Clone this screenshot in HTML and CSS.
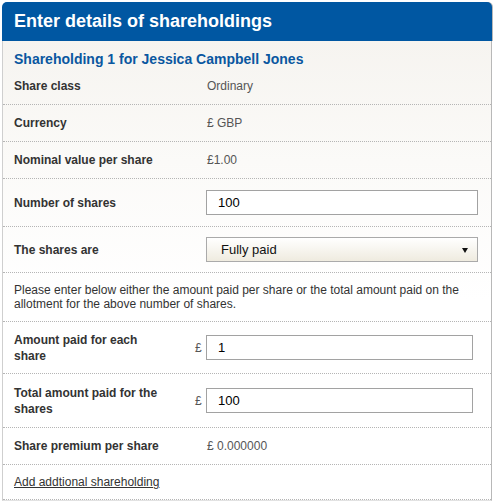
FILE: index.html
```html
<!DOCTYPE html>
<html>
<head>
<meta charset="utf-8">
<link rel="stylesheet" href="styles.css">
</head>
<body>
<div class="panel">
  <div class="panel-head">Enter details of shareholdings</div>
  <div class="panel-body">
    <div class="title">Shareholding 1 for Jessica Campbell Jones</div>
    <div class="row h37">
      <div class="label">Share class</div><div class="cur"></div><div class="value">Ordinary</div>
    </div>
    <div class="row h37">
      <div class="label">Currency</div><div class="cur"></div><div class="value">£ GBP</div>
    </div>
    <div class="row h37">
      <div class="label">Nominal value per share</div><div class="cur"></div><div class="value">£1.00</div>
    </div>
    <div class="row h48">
      <div class="label">Number of shares</div><div class="cur"></div><div class="value"><input class="field wide" type="text" value="100"></div>
    </div>
    <div class="row h46">
      <div class="label">The shares are</div><div class="cur"></div>
      <div class="value">
        <div class="select">
          <span class="select-text">Fully paid</span>
          <svg class="arrow" width="6" height="5" viewBox="0 0 6 5"><path d="M0 0H6L3 5Z" fill="#111"/></svg>
        </div>
      </div>
    </div>
    <div class="note">Please enter below either the amount paid per share or the total amount paid on the allotment for the above number of shares.</div>
    <div class="row h52">
      <div class="label">Amount paid for each share</div><div class="cur">£</div><div class="value"><input class="field narrow" type="text" value="1"></div>
    </div>
    <div class="row h54">
      <div class="label">Total amount paid for the shares</div><div class="cur">£</div><div class="value"><input class="field narrow" type="text" value="100"></div>
    </div>
    <div class="row h37">
      <div class="label">Share premium per share</div><div class="cur"></div><div class="value">£ 0.000000</div>
    </div>
    <div class="row h35 last">
      <a class="add-link" href="#">Add addtional shareholding</a>
    </div>
  </div>
</div>
</body>
</html>
```

FILE: styles.css
```css
* { box-sizing: border-box; }
html, body { margin: 0; padding: 0; background: #fff; }
body { font-family: "Liberation Sans", Arial, sans-serif; font-size: 12px; color: #333; }

.panel {
  margin: 2px 0 0 2px;
  width: 490px;
}

.panel-head {
  height: 39px;
  background: #0057a2;
  color: #fff;
  font-size: 18px;
  font-weight: bold;
  line-height: 39px;
  padding-left: 12px;
  border-radius: 5px 5px 0 0;
  box-shadow: 1px 0 0 #b8b8b8;
}

.panel-body {
  border-left: 1px solid #cfcfcf;
  border-right: 1px solid #b8b8b8;
  border-bottom: 1px solid #e2e2e2;
  background: linear-gradient(#f6f4f0 0px, #fbfaf8 120px, #fff 260px);
}

.title {
  height: 27px;
  padding: 10px 0 0 11px;
  font-size: 14px;
  line-height: 17px;
  font-weight: bold;
  color: #0a57a0;
}

.row {
  display: grid;
  grid-template-columns: 178px 14px 1fr;
  align-items: center;
  padding-left: 11px;
  border-bottom: 1px dotted #b5b5b5;
}
.h35 { height: 35px; }
.h37 { height: 37px; }
.h46 { height: 46px; }
.h48 { height: 48px; }
.h52 { height: 52px; }
.h54 { height: 54px; }

.row.last { display: flex; }

.label {
  font-weight: bold;
  color: #333;
  line-height: 16px;
  padding-right: 20px;
}

.cur { color: #555; font-size: 12px; padding-left: 3px; }

.value { color: #555; padding-left: 1px; }

.field {
  display: block;
  height: 25px;
  border: 1px solid #a2a2a2;
  background: #fff;
  font-family: "Liberation Sans", Arial, sans-serif;
  font-size: 13px;
  color: #000;
  padding: 0 0 0 11px;
  margin: 0 0 0 -1px;
  outline: none;
}
.field.wide { width: 272px; }
.field.narrow { width: 267px; }

.select {
  position: relative;
  width: 272px;
  height: 25px;
  margin-left: -1px;
  border: 1px solid #aaa;
  background: linear-gradient(#ffffff, #efebdf);
  font-size: 13px;
  color: #111;
  line-height: 23px;
  padding-left: 14px;
}
.arrow {
  position: absolute;
  right: 9px;
  top: 10px;
}

.note {
  height: 49px;
  padding: 10px 20px 0 11px;
  line-height: 14px;
  color: #333;
  border-bottom: 1px dotted #b5b5b5;
}

.add-link {
  color: #333;
  text-decoration: underline;
}
```
